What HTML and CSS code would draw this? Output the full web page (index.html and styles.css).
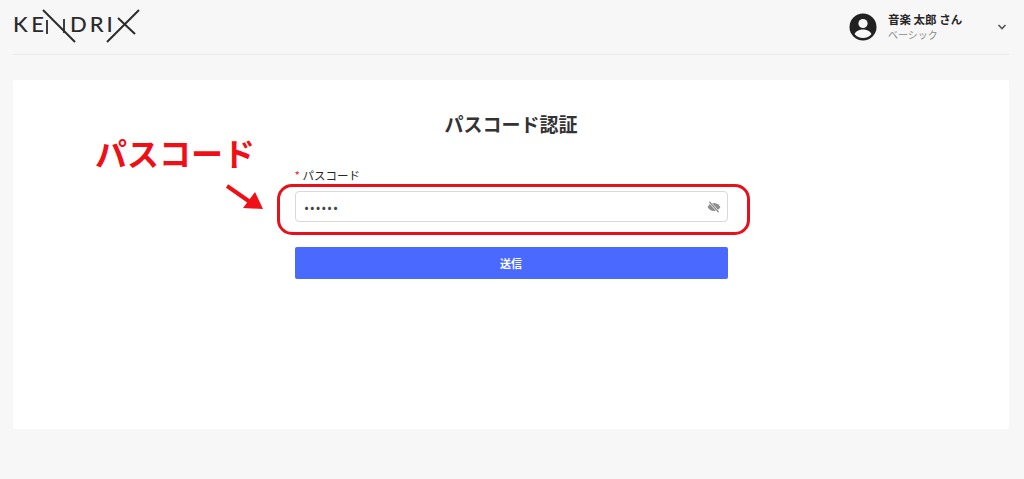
FILE: index.html
```html
<!DOCTYPE html>
<html lang="ja">
<head>
    <meta charset="UTF-8">
    <meta name="viewport" content="width=device-width, initial-scale=1.0">
    <title>パスコード認証</title>
    <link rel="stylesheet" href="styles.css">
</head>
<body>
    <header class="topbar">
        <div class="logo">
            <span class="logo-left">KE</span>
            <span class="logo-right">DRI</span>
            <!-- the N and X of the logo are long crossing strokes -->
            <svg class="logo-strokes" width="150" height="54" viewBox="0 0 150 54">
                <path d="M43 10 L75 42" stroke="#2b2b2b" stroke-width="2" fill="none"/>
                <path d="M47 34 L47 20 M64 33 L64 19" stroke="#2b2b2b" stroke-width="1.8" fill="none"/>
                <path d="M107 42 L139 10" stroke="#2b2b2b" stroke-width="2" fill="none"/>
                <path d="M118 18 L135 34" stroke="#2b2b2b" stroke-width="2" fill="none"/>
            </svg>
        </div>
        <div class="user-menu">
            <svg class="avatar" width="28" height="28" viewBox="0 0 28 28">
                <circle cx="14" cy="14" r="13.5" fill="#212121"/>
                <circle cx="14" cy="10.5" r="4.6" fill="#f7f7f7"/>
                <path d="M5.5 21 C7.5 17.5 11 16.6 14 16.6 C17 16.6 20.5 17.5 22.5 21 C20.5 23.5 17.5 25 14 25 C10.5 25 7.5 23.5 5.5 21 Z" fill="#f7f7f7"/>
            </svg>
            <div class="user-info">
                <div class="user-name">音楽 太郎 さん</div>
                <div class="user-plan">ベーシック</div>
            </div>
            <svg class="chevron" width="10" height="8" viewBox="0 0 10 8">
                <path d="M1.5 2 L5 5.5 L8.5 2" stroke="#555" stroke-width="1.6" fill="none"/>
            </svg>
        </div>
    </header>

    <main class="card">
        <h2 class="title">パスコード認証</h2>
        <form class="passcode-form">
            <label class="field-label" for="passcode"><span class="required">*</span> パスコード</label>
            <div class="input-wrap">
                <span class="input-value" id="passcode">••••••</span>
                <svg class="eye" width="14" height="12" viewBox="0 0 24 20">
                    <path d="M12 3 C6.5 3 2.8 6.8 1 10 C2.8 13.2 6.5 17 12 17 C17.5 17 21.2 13.2 23 10 C21.2 6.8 17.5 3 12 3 Z" fill="#8c8c8c"/>
                    <path d="M4 1 L20 19" stroke="#fff" stroke-width="4"/>
                    <path d="M4 1 L20 19" stroke="#8c8c8c" stroke-width="2"/>
                </svg>
            </div>
            <button type="button" class="submit-btn">送信</button>
        </form>
    </main>

    <!-- annotations drawn on top of the screenshot -->
    <div class="note-text">パスコード</div>
    <svg class="note-arrow" width="40" height="32" viewBox="0 0 40 32">
        <path d="M1 2 L24 18" stroke="#f00f17" stroke-width="4" fill="none"/>
        <path d="M17 24 L37 25 L29 8 Z" fill="#f00f17"/>
    </svg>
    <div class="note-ring"></div>
</body>
</html>
```

FILE: styles.css
```css
/* General reset */
* {
    margin: 0;
    padding: 0;
    box-sizing: border-box;
}

body {
    font-family: "Noto Sans CJK JP", "Noto Sans", sans-serif;
    background-color: #f7f7f7;
    color: #262626;
    height: 479px;
    padding: 0 15px 0 13px;
    overflow: hidden;
    position: relative;
}

/* Header */
.topbar {
    height: 55px;
    border-bottom: 1px solid #ebebeb;
    display: flex;
    justify-content: space-between;
    align-items: center;
}

.logo {
    position: relative;
    width: 128px;
    height: 54px;
    display: flex;
    align-items: center;
    font-family: Lato, sans-serif;
    font-weight: 500;
    font-size: 22px;
    letter-spacing: 3.5px;
    line-height: 1;
    color: #2b2b2b;
    padding-bottom: 7px;
}

.logo-left {
    width: 57px;
}

.logo-right {
    letter-spacing: 3px;
}

.logo-strokes {
    position: absolute;
    left: -13px;
    top: 0;
    overflow: visible;
}

.user-menu {
    display: flex;
    align-items: center;
    margin-right: 2px;
}

.avatar {
    margin-right: 11px;
}

.user-info {
    width: 109px;
}

.user-name {
    font-size: 11.5px;
    font-weight: 700;
    line-height: 15px;
}

.user-plan {
    font-size: 10px;
    line-height: 15px;
    color: #8c8c8c;
}

/* Card */
.card {
    margin-top: 25px;
    height: 349px;
    background-color: white;
    border-radius: 2px;
    display: flex;
    flex-direction: column;
    align-items: center;
    padding-top: 29px;
}

.title {
    font-size: 19px;
    font-weight: 700;
    line-height: 29px;
    color: #333;
    margin-bottom: 28px;
}

.passcode-form {
    width: 433px;
}

.field-label {
    display: block;
    font-size: 11.5px;
    line-height: 18px;
    margin-bottom: 7px;
}

.required {
    color: #e0282e;
}

.input-wrap {
    height: 31px;
    background-color: white;
    border: 1px solid #d9d9d9;
    border-radius: 4px;
    padding: 0 6px 0 9px;
    display: flex;
    justify-content: space-between;
    align-items: center;
    margin-bottom: 25px;
}

.input-value {
    font-size: 12px;
    letter-spacing: 1.7px;
    color: #444;
}

.submit-btn {
    display: block;
    width: 100%;
    height: 32px;
    background-color: #4a69ff;
    color: white;
    font-family: inherit;
    font-size: 11px;
    font-weight: 700;
    border: none;
    border-radius: 2px;
}

/* Red annotations */
.note-text {
    position: absolute;
    left: 95px;
    top: 130px;
    font-size: 32px;
    font-weight: 700;
    line-height: 44px;
    color: #f00f17;
}

.note-arrow {
    position: absolute;
    left: 226px;
    top: 184px;
}

.note-ring {
    position: absolute;
    left: 277px;
    top: 184px;
    width: 473px;
    height: 51px;
    border: 3px solid #e8101a;
    border-radius: 15px;
}
```
